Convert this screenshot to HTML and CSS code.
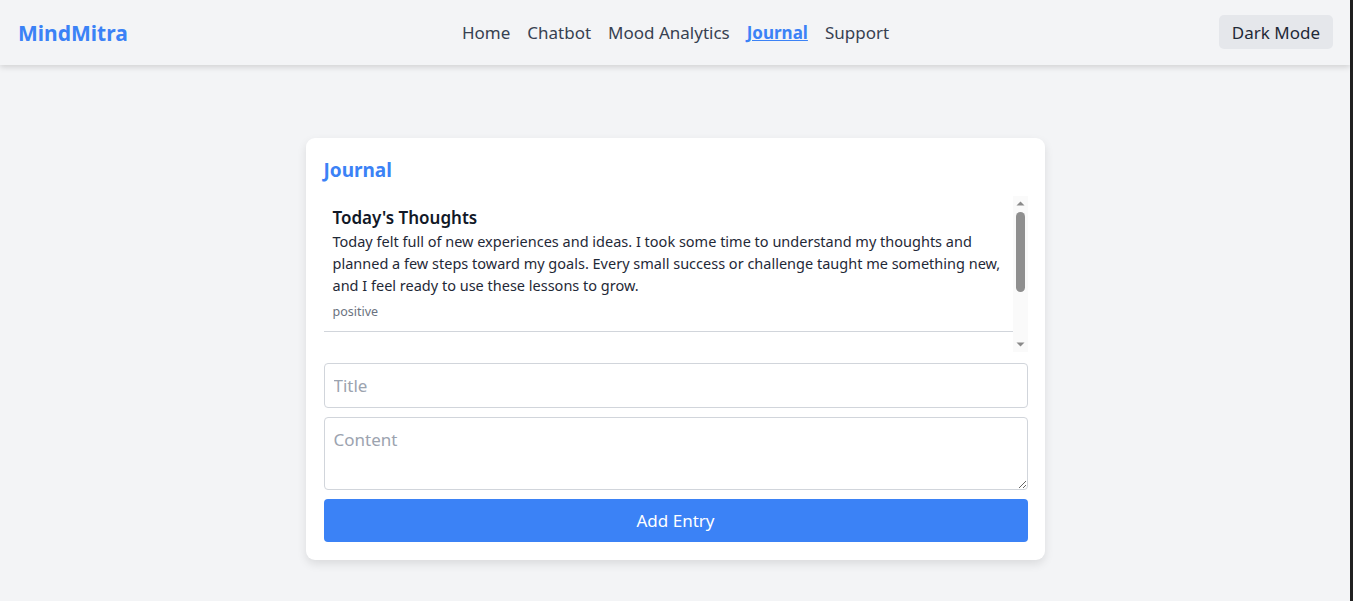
FILE: index.html
```html
<!DOCTYPE html>
<html lang="en">
<head>
<meta charset="utf-8">
<title>MindMitra - Journal</title>
<link rel="stylesheet" href="styles.css">
</head>
<body>
<div class="page">
  <header class="navbar">
    <div class="logo">MindMitra</div>
    <nav class="links">
      <a href="#">Home</a>
      <a href="#">Chatbot</a>
      <a href="#">Mood Analytics</a>
      <a href="#" class="active">Journal</a>
      <a href="#">Support</a>
    </nav>
    <div class="right"><button class="mode-btn">Dark Mode</button></div>
  </header>
  <main class="main">
    <section class="card">
      <h2 class="card-title">Journal</h2>
      <div class="entries-wrap">
        <div class="entries">
          <article class="entry">
            <h3 class="entry-title">Today's Thoughts</h3>
            <p class="entry-text">Today felt full of new experiences and ideas. I took some time to understand my thoughts and planned a few steps toward my goals. Every small success or challenge taught me something new, and I feel ready to use these lessons to grow.</p>
            <span class="entry-mood">positive</span>
          </article>
        </div>
        <div class="scrollbar" aria-hidden="true">
          <div class="sb-btn"><svg width="15" height="14" viewBox="0 0 15 14"><polygon points="3.5,9.5 11.5,9.5 7.5,5.5" fill="#8a8a8a"/></svg></div>
          <div class="sb-track"><div class="sb-thumb"></div></div>
          <div class="sb-btn"><svg width="15" height="14" viewBox="0 0 15 14"><polygon points="3.5,4.5 11.5,4.5 7.5,8.5" fill="#8a8a8a"/></svg></div>
        </div>
      </div>
      <form class="form">
        <input class="field" type="text" placeholder="Title">
        <textarea class="field area" placeholder="Content"></textarea>
        <button type="button" class="add-btn">Add Entry</button>
      </form>
    </section>
  </main>
</div>
</body>
</html>
```

FILE: styles.css
```css
* { box-sizing: border-box; }
html, body { margin: 0; padding: 0; }
body {
  font-family: "Noto Sans", "Open Sans", sans-serif;
  background: #202020;
  color: #1f2937;
}
.page {
  min-height: 100vh;
  margin-right: 3px;
  background: #f3f4f6;
}
.navbar {
  height: 65px;
  display: grid;
  grid-template-columns: 1fr auto 1fr;
  align-items: center;
  padding: 0 17px 0 18px;
  background: #f3f4f6;
  box-shadow: 0 2px 6px rgba(0,0,0,0.15);
  position: relative;
}
.logo {
  font-size: 21px;
  font-weight: 700;
  color: #3b82f6;
}
.links {
  display: flex;
  gap: 17px;
  font-size: 17px;
}
.links a {
  color: #374151;
  text-decoration: none;
}
.links a.active {
  color: #3b82f6;
  font-weight: 700;
  text-decoration: underline;
}
.right { display: flex; justify-content: flex-end; }
.mode-btn {
  font-family: inherit;
  font-size: 17px;
  color: #1f2937;
  background: #e5e7eb;
  border: none;
  border-radius: 5px;
  height: 34px;
  padding: 0 13px;
  margin-top: -1px;
}
.main {
  display: flex;
  justify-content: center;
  padding-top: 73px;
}
.card {
  width: 739px;
  background: #fff;
  border-radius: 9px;
  box-shadow: 0 4px 10px rgba(0,0,0,0.1);
  padding: 18px 17px 18px 18px;
}
.card-title {
  margin: 0 0 12px;
  font-size: 19px;
  line-height: 28px;
  font-weight: 700;
  color: #3b82f6;
}
.entries-wrap {
  display: flex;
  height: 156px;
  margin-bottom: 11px;
}
.entries {
  flex: 1;
  overflow: hidden;
}
.scrollbar {
  width: 15px;
  display: flex;
  flex-direction: column;
  background: #fafafa;
}
.sb-btn {
  height: 14px;
  display: flex;
}
.sb-track {
  flex: 1;
  padding: 2px 3px 0;
}
.sb-thumb {
  height: 80px;
  background: #8f8f8f;
  border-radius: 5px;
}
.entry {
  padding: 10px 9px 10px;
  border-bottom: 1px solid #d1d5db;
}
.entry-title {
  margin: 0;
  font-size: 17px;
  line-height: 24px;
  font-weight: 600;
  color: #111827;
}
.entry-text {
  margin: 0;
  font-size: 14.5px;
  line-height: 22px;
  color: #1f2937;
}
.entry-mood {
  display: block;
  margin-top: 7px;
  font-size: 12.5px;
  line-height: 18px;
  color: #6b7280;
}
.form {
  display: flex;
  flex-direction: column;
  gap: 9px;
}
.field {
  width: 100%;
  font-family: inherit;
  font-size: 17px;
  color: #1f2937;
  border: 1px solid #d1d5db;
  border-radius: 4px;
  padding: 0 9px;
  height: 45px;
  background: #fff;
  outline: none;
}
.field::placeholder { color: #9ca3af; }
.area {
  height: 73px;
  padding-top: 10px;
  resize: vertical;
  display: block;
}
.add-btn {
  height: 43px;
  width: 100%;
  border: none;
  border-radius: 4px;
  background: #3b82f6;
  color: #fff;
  font-family: inherit;
  font-size: 17px;
}
```
